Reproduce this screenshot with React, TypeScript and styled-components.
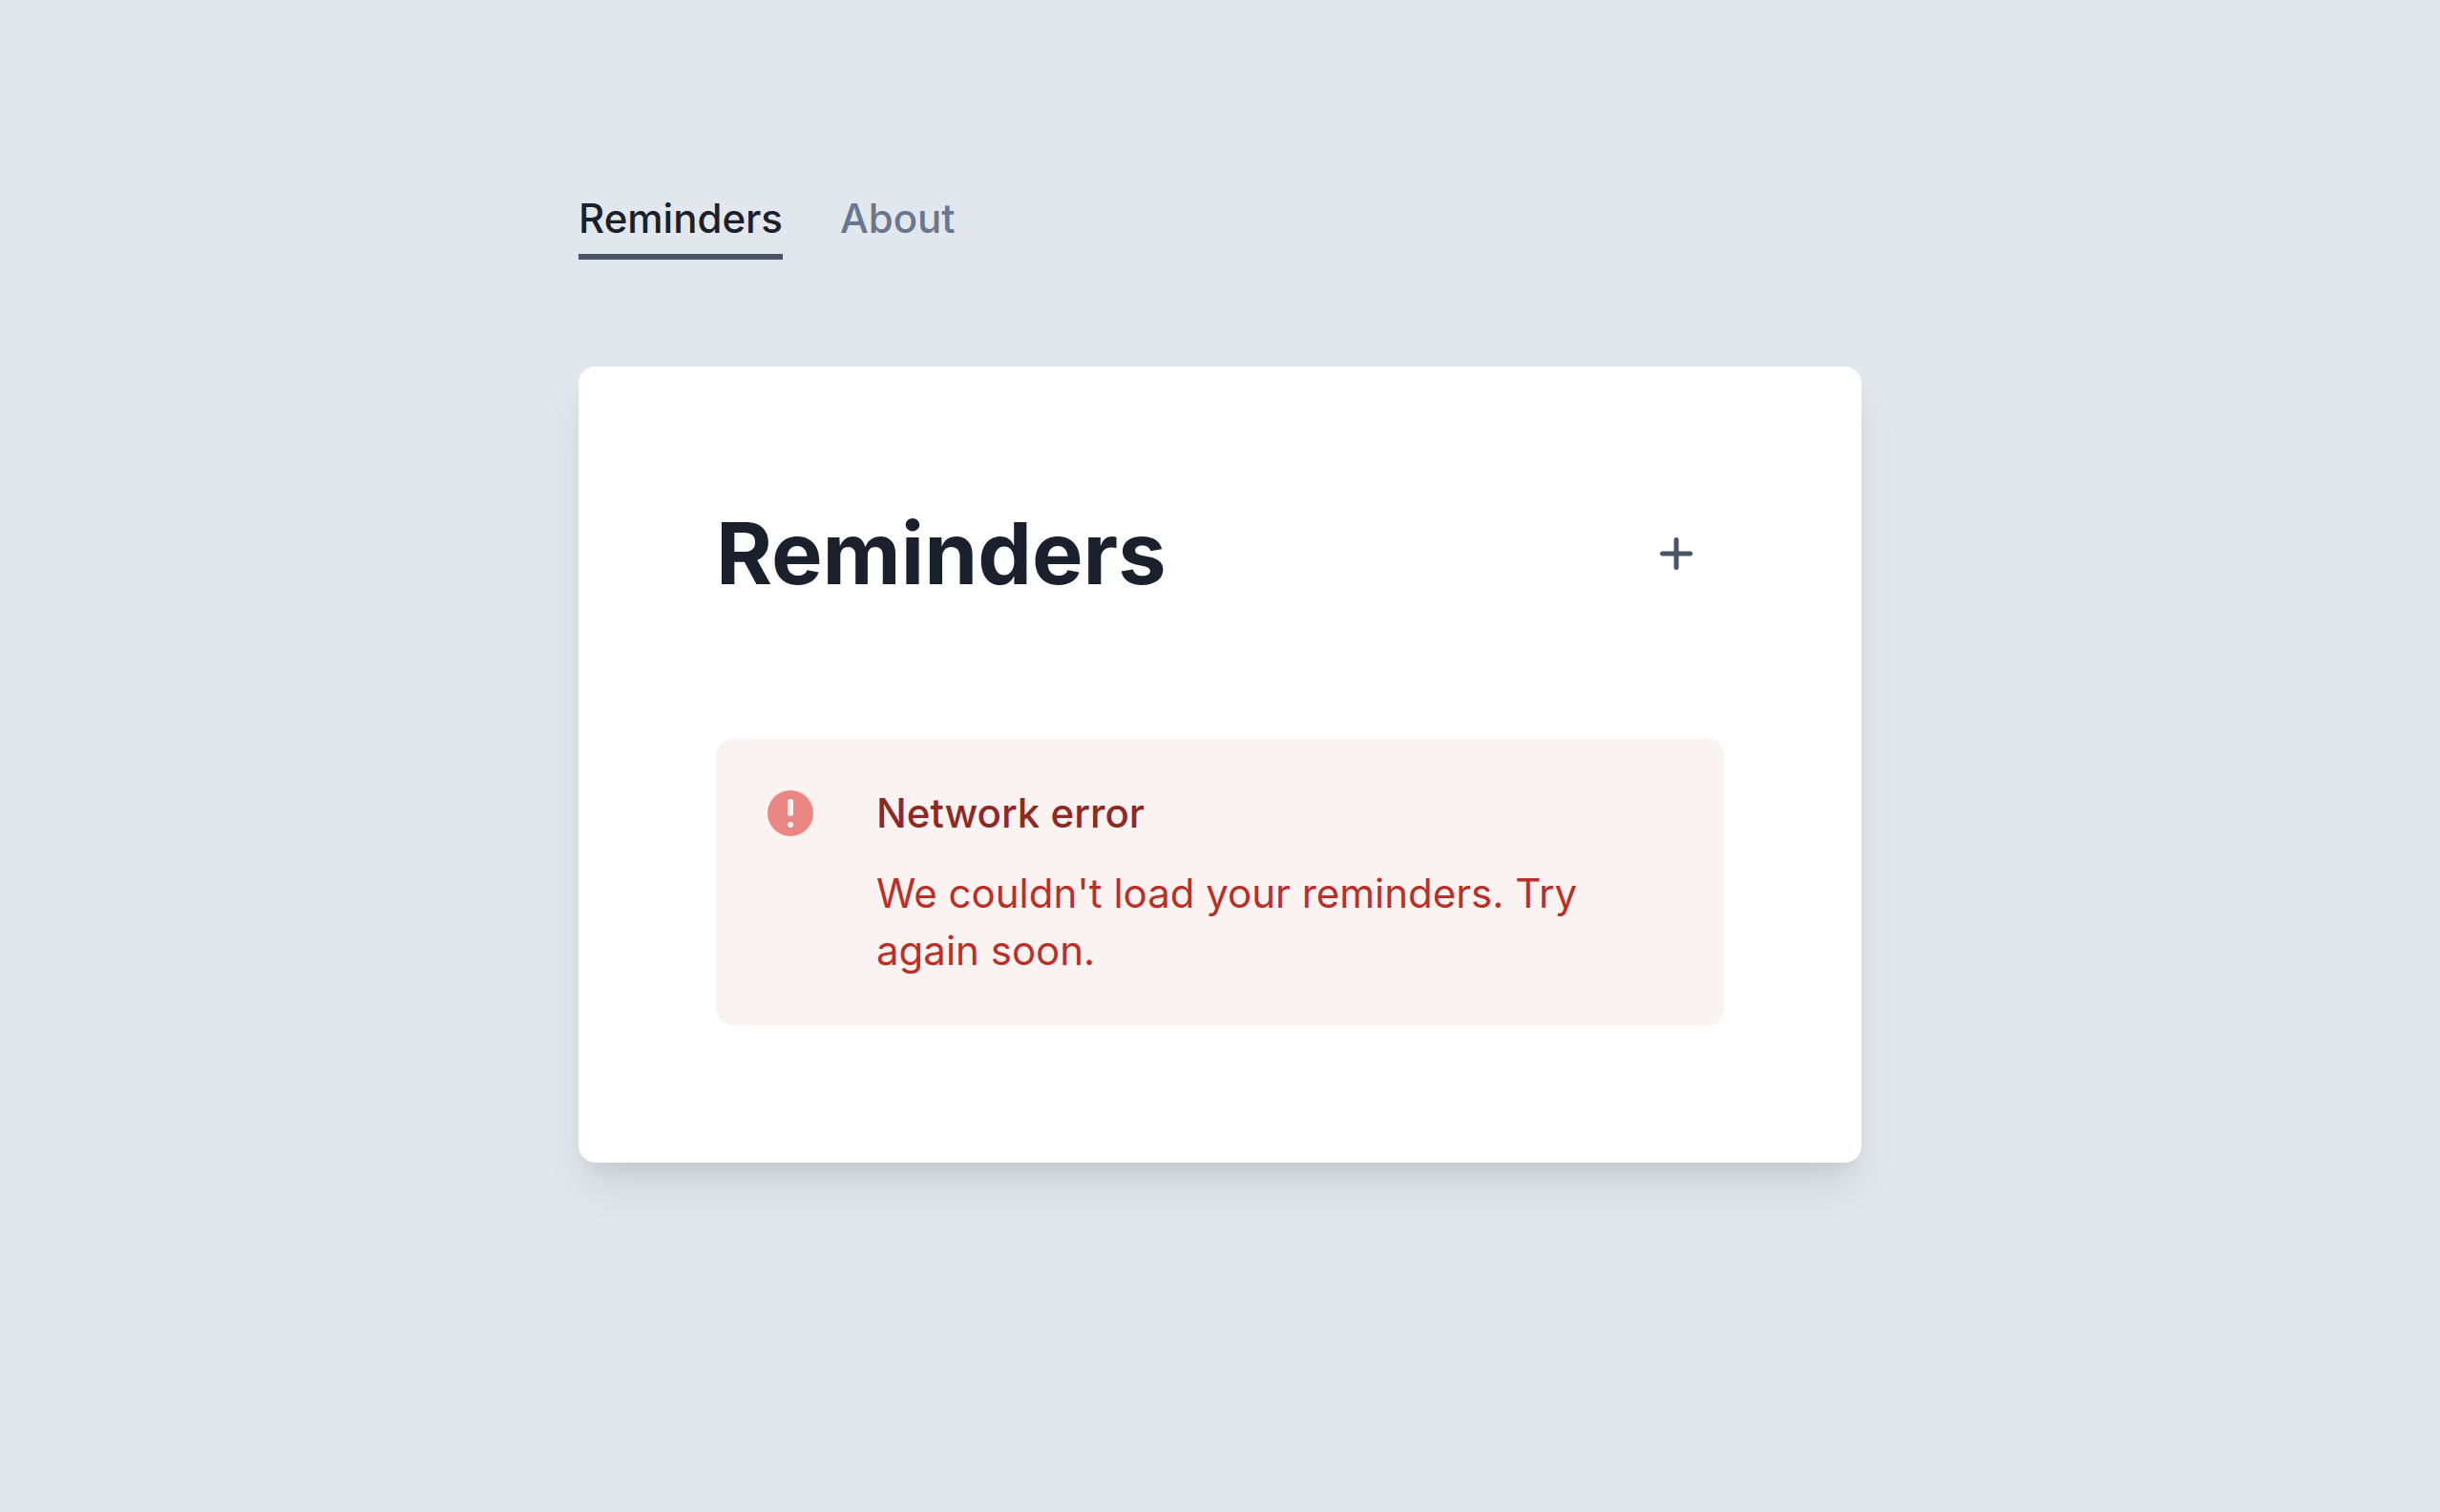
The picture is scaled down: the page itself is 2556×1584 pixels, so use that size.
import React from "react";
import styled, { createGlobalStyle } from "styled-components";

const GlobalStyle = createGlobalStyle`
  *, *::before, *::after { box-sizing: border-box; }
  body {
    margin: 0;
    min-height: 100vh;
    background: #e2e7ee;
    font-family: Inter, "Liberation Sans", sans-serif;
    -webkit-font-smoothing: antialiased;
  }
  h1, h2, p { margin: 0; }
`;

const Page = styled.div`
  width: 100%;
  max-width: 1344px;
  margin: 0 auto;
  padding: 199px 0;
`;

const Nav = styled.nav`
  display: flex;
  gap: 60px;
  margin-bottom: 112px;
`;

const NavLink = styled.a<{ $active?: boolean }>`
  padding-bottom: 7px;
  border-bottom: 6px solid ${(p) => (p.$active ? "#4a5568" : "transparent")};
  color: ${(p) => (p.$active ? "#1a202c" : "#69778e")};
  font-size: 42px;
  font-weight: 500;
  line-height: 60px;
  text-decoration: none;
`;

const Card = styled.main`
  padding: 144px;
  border-radius: 18px;
  background: #fff;
  box-shadow: 0 30px 45px -9px rgba(0, 0, 0, 0.1), 0 12px 18px -6px rgba(0, 0, 0, 0.05);
`;

const CardHeader = styled.header`
  display: flex;
  align-items: center;
  justify-content: space-between;
  margin-bottom: 142px;
`;

const Title = styled.h1`
  color: #1a202c;
  font-size: 90px;
  font-weight: 700;
  line-height: 104px;
`;

const AddButton = styled.button`
  display: flex;
  padding: 20px;
  border: 0;
  background: none;
  color: #4a5568;
  cursor: pointer;
`;

const Alert = styled.section`
  display: flex;
  gap: 36px;
  padding: 48px;
  border-radius: 18px;
  background: #fbf3f2;
`;

const AlertBody = styled.div`
  flex: 1;
  display: grid;
  gap: 24px;
  padding: 0 24px;
`;

const AlertTitle = styled.h2`
  color: #8e2923;
  font-size: 42px;
  font-weight: 500;
  line-height: 60px;
`;

const AlertText = styled.p`
  color: #ba3029;
  font-size: 42px;
  font-weight: 400;
  line-height: 60px;
`;

export default function App() {
  return (
    <>
      <GlobalStyle />
      <Page>
        <Nav>
          <NavLink href="#reminders" $active aria-current="page">Reminders</NavLink>
          <NavLink href="#about">About</NavLink>
        </Nav>
        <Card>
          <CardHeader>
            <Title>Reminders</Title>
            <AddButton type="button" aria-label="Add reminder">
              <svg width="60" height="60" viewBox="0 0 60 60" fill="none" stroke="currentColor" strokeWidth="5" strokeLinecap="round" aria-hidden="true">
                <path d="M30 15.5v29M15.5 30h29" />
              </svg>
            </AddButton>
          </CardHeader>
          <Alert role="alert">
            <svg width="60" height="60" viewBox="0 0 20 20" fill="#eb8783" aria-hidden="true">
              <path fillRule="evenodd" clipRule="evenodd" d="M18 10a8 8 0 11-16 0 8 8 0 0116 0zm-7 4a1 1 0 11-2 0 1 1 0 012 0zm-1-9a1 1 0 00-1 1v4a1 1 0 102 0V6a1 1 0 00-1-1z" />
            </svg>
            <AlertBody>
              <AlertTitle>Network error</AlertTitle>
              <AlertText>We couldn't load your reminders. Try again soon.</AlertText>
            </AlertBody>
          </Alert>
        </Card>
      </Page>
    </>
  );
}
